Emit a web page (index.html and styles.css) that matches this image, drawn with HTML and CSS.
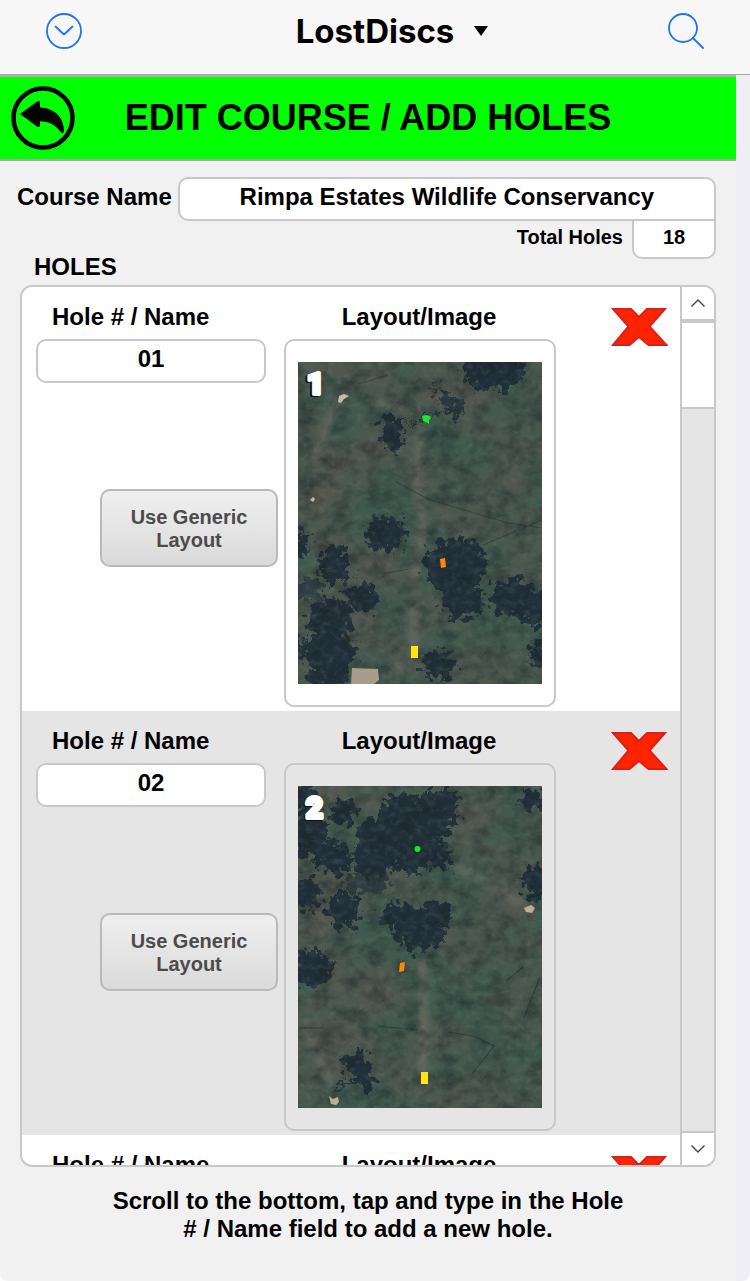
FILE: index.html
```
<!DOCTYPE html>
<html lang="en">
<head>
<meta charset="utf-8">
<meta name="viewport" content="width=device-width, initial-scale=1">
<title>LostDiscs</title>
<link rel="stylesheet" href="styles.css">
</head>
<body>
<svg class="defs" width="0" height="0" aria-hidden="true">
  <defs>
    <!-- broad brown patches over the grass -->
    <filter id="patches" x="0" y="0" width="100%" height="100%" color-interpolation-filters="sRGB">
      <feTurbulence type="fractalNoise" baseFrequency="0.013 0.017" numOctaves="5" seed="7"/>
      <feColorMatrix values="0 0 0 0 0.34  0 0 0 0 0.34  0 0 0 0 0.31  2.2 0 0 0 -0.75"/>
    </filter>
    <filter id="grain" x="0" y="0" width="100%" height="100%" color-interpolation-filters="sRGB">
      <feTurbulence type="fractalNoise" baseFrequency="0.057 0.063" numOctaves="5" seed="3"/>
      <feColorMatrix values="0 0 0 0 0.10  0 0 0 0 0.14  0 0 0 0 0.15  0 1.6 0 0 -0.62"/>
    </filter>
    <filter id="glint" x="0" y="0" width="100%" height="100%" color-interpolation-filters="sRGB">
      <feTurbulence type="fractalNoise" baseFrequency="0.137 0.151" numOctaves="4" seed="19"/>
      <feColorMatrix values="0 0 0 0 0.42  0 0 0 0 0.50  0 0 0 0 0.46  0 0 2.4 0 -1.1"/>
    </filter>
    <filter id="canopy" x="-20%" y="-20%" width="140%" height="140%" color-interpolation-filters="sRGB">
      <feTurbulence type="fractalNoise" baseFrequency="0.137" numOctaves="3" seed="5" result="n"/>
      <feDisplacementMap in="SourceGraphic" in2="n" scale="26" xChannelSelector="R" yChannelSelector="G" result="d"/>
      <feGaussianBlur in="d" stdDeviation="0.6"/>
    </filter>
    <filter id="soft"><feGaussianBlur stdDeviation="3"/></filter>
  </defs>
</svg>

<header class="topbar">
  <button class="plain topbar-left" type="button" aria-label="Show menu">
    <svg width="36" height="36" viewBox="0 0 36 36" fill="none" stroke="#2075e8" stroke-width="1.8"><circle cx="18" cy="18" r="17"/><path d="M9.500 13.500l8.500 8 8.500-8" stroke-linecap="round" stroke-linejoin="round"/></svg>
  </button>
  <h1 class="app-name">LostDiscs</h1>
  <div class="topbar-right">
    <button class="plain" type="button" aria-label="Switch file">
      <svg width="14" height="10" viewBox="0 0 14 10"><path d="M0 0h14L7 10z"/></svg>
    </button>
    <button class="plain" type="button" aria-label="Search">
      <svg width="36" height="36" viewBox="0 0 36 36" fill="none" stroke="#2075e8" stroke-width="1.8"><circle cx="15" cy="15" r="14"/><path d="M25 25l10 10" stroke-linecap="round"/></svg>
    </button>
  </div>
</header>

<main class="page">
  <div class="banner">
    <button class="plain" type="button" aria-label="Back">
      <svg width="64" height="64" viewBox="0 0 64 64"><circle cx="32" cy="32" r="29.500" fill="none" stroke="#000" stroke-width="4.600"/><path d="M9 28L26.500 15.300Q29 14 29 17V21.500C42 22 53 30 53 45Q52.500 48.500 50 46.500C44 38.500 38 35.500 29 35.300V39.500Q28.500 42 26 40.500z"/></svg>
    </button>
    <h2 class="banner-title">EDIT COURSE / ADD HOLES</h2>
  </div>

  <div class="course">
    <label for="course-name">Course Name</label>
    <input class="field course-field" id="course-name" type="text" value="Rimpa Estates Wildlife Conservancy">
  </div>
  <div class="totals">
    <h3 class="holes-title">HOLES</h3>
    <label class="total-label" for="total">Total Holes</label>
    <input class="field total-field" id="total" type="text" value="18">
  </div>

  <section class="panel" aria-label="Holes">
    <div class="list">
      <article class="hole">
        <div class="name-col">
          <label class="heading" for="hole-1">Hole # / Name</label>
          <input class="field hole-field" id="hole-1" type="text" value="01">
          <button class="generic" type="button">Use Generic Layout</button>
        </div>
        <div class="image-col">
          <h4 class="heading">Layout/Image</h4>
          <div class="frame">
            <svg class="map" viewBox="0 0 244 322" role="img" aria-label="Aerial layout of hole 1">
              <rect width="244" height="322" fill="#40594e"/>
              <rect width="244" height="322" filter="url(#patches)"/>
              <g filter="url(#soft)" fill="none" stroke="#756e67" opacity=".6">
                <path d="M124 60L120 110L124 170L116 220L116 290" stroke-width="9"/>
                <path d="M45 35L28 62L15 100" stroke-width="8"/>
                <path d="M66 36L112 50" stroke-width="5"/>
                <path d="M115 298L84 315" stroke-width="6"/>
              </g>
              <g fill="none" stroke="#303a38" stroke-width="1.200" opacity=".7">
                <path d="M98 120L130 137L160 146L210 161L244 166M84 212L110 207M185 183L244 158M60 22L90 13"/>
              </g>
              <g filter="url(#canopy)" fill="#212f3a">
                <ellipse cx="195" cy="9" rx="31" ry="20"/>
                <path d="M136 23l14 6 14 13-1 14-11-4-10-14z" opacity=".85"/>
                <path d="M86 53l18 3 3 10-7 23-14-2-4-17z"/>
                <path d="M101 58q13 6 25-1l20-11" fill="none" stroke="#212f3a" stroke-width="2"/>
                <ellipse cx="87" cy="172" rx="20" ry="17"/>
                <ellipse cx="157" cy="205" rx="31" ry="29"/>
                <ellipse cx="165" cy="239" rx="22" ry="18"/>
                <ellipse cx="217" cy="236" rx="24" ry="19"/>
                <ellipse cx="238" cy="247" rx="14" ry="17"/>
                <ellipse cx="36" cy="203" rx="15" ry="19"/>
                <ellipse cx="64" cy="236" rx="17" ry="15"/>
                <ellipse cx="12" cy="228" rx="13" ry="12" opacity=".65"/>
                <ellipse cx="32" cy="256" rx="23" ry="20"/>
                <ellipse cx="33" cy="290" rx="25" ry="22"/>
                <ellipse cx="28" cy="316" rx="23" ry="10"/>
                <ellipse cx="2" cy="182" rx="9" ry="14"/>
                <ellipse cx="4" cy="285" rx="7" ry="10"/>
                <ellipse cx="141" cy="302" rx="17" ry="15"/>
                <ellipse cx="241" cy="290" rx="9" ry="14"/>
              </g>
              <rect width="244" height="322" filter="url(#grain)" opacity=".7"/>
              <rect width="244" height="322" filter="url(#glint)" opacity=".25"/>
              <path d="M54 306l26 1 1 11-5 4H53z" fill="#a99c8c"/>
              <path d="M41 34l5-2 5 2-5 3-3 4-3-1zM12 138l3-3 2 2-2 3z" fill="#c8b8a8"/>
              <path d="M124 54l4-1 4 1 1 3-2 1v4l-3-2-3-1z" fill="#1fe82f"/>
              <path d="M142 197l5-1 1 9-5 1z" fill="#ff860c"/>
              <path d="M113 284h7v12h-7z" fill="#ffe510"/>
              <text class="hole-number number-shadow" x="7" y="33">1</text>
              <text class="hole-number" x="9" y="32">1</text>
            </svg>
          </div>
        </div>
        <button class="plain delete" type="button" aria-label="Delete hole 01">
          <svg width="57" height="40" viewBox="0 0 57 40"><path d="M2 2H20L28 10 36 2H54L38.500 19.500 55.500 38H37.500L28 30 18.500 38H2L17.500 19.500z" fill="#ff2400" stroke="#d8201c" stroke-width="2"/></svg>
        </button>
      </article>

      <article class="hole">
        <div class="name-col">
          <label class="heading" for="hole-2">Hole # / Name</label>
          <input class="field hole-field" id="hole-2" type="text" value="02">
          <button class="generic" type="button">Use Generic Layout</button>
        </div>
        <div class="image-col">
          <h4 class="heading">Layout/Image</h4>
          <div class="frame">
            <svg class="map" viewBox="0 0 244 322" role="img" aria-label="Aerial layout of hole 2">
              <rect width="244" height="322" fill="#40594e"/>
              <rect width="244" height="322" filter="url(#patches)"/>
              <g filter="url(#soft)" fill="none" stroke="#7b746a" opacity=".6">
                <path d="M152 79L185 95L222 117L232 125" stroke-width="6"/>
                <path d="M124 174L126 210L125 290" stroke-width="8"/>
                <path d="M5 235L32 295" stroke-width="6"/>
              </g>
              <g fill="none" stroke="#2b3434" stroke-width="1.200" opacity=".7">
                <path d="M150 246l25 4 21 10-22 28M242 191l-16 41M208 195l17-14M0 242h26M80 240l40 4"/>
              </g>
              <g filter="url(#canopy)" fill="#212f3a">
                <ellipse cx="8" cy="14" rx="12" ry="18"/>
                <ellipse cx="12" cy="48" rx="17" ry="25"/>
                <ellipse cx="36" cy="72" rx="17" ry="17"/>
                <ellipse cx="46" cy="27" rx="12" ry="14"/>
                <ellipse cx="102" cy="27" rx="20" ry="19"/>
                <ellipse cx="135" cy="28" rx="23" ry="23"/>
                <ellipse cx="148" cy="12" rx="12" ry="10"/>
                <ellipse cx="82" cy="49" rx="24" ry="19"/>
                <ellipse cx="77" cy="70" rx="22" ry="22"/>
                <ellipse cx="113" cy="60" rx="25" ry="27"/>
                <ellipse cx="143" cy="70" rx="11" ry="16"/>
                <ellipse cx="67" cy="97" rx="24" ry="11" opacity=".65"/>
                <ellipse cx="235" cy="14" rx="14" ry="10"/>
                <ellipse cx="239" cy="97" rx="14" ry="18"/>
                <ellipse cx="9" cy="107" rx="13" ry="16"/>
                <ellipse cx="46" cy="124" rx="18" ry="17"/>
                <ellipse cx="102" cy="130" rx="20" ry="14"/>
                <ellipse cx="135" cy="131" rx="17" ry="17"/>
                <ellipse cx="122" cy="148" rx="25" ry="18"/>
                <ellipse cx="15" cy="183" rx="20" ry="19"/>
                <ellipse cx="58" cy="279" rx="14" ry="12"/>
                <ellipse cx="68" cy="291" rx="8" ry="14"/>
                <path d="M36 309q8-15 25-15" fill="none" stroke="#212f3a" stroke-width="3"/>
              </g>
              <rect width="244" height="322" filter="url(#grain)" opacity=".7"/>
              <rect width="244" height="322" filter="url(#glint)" opacity=".25"/>
              <path d="M226 122l7-3 4 3-3 5-6-1zM31 310l4 3 5-2 1 5-3 3-5-1z" fill="#c0ad99"/>
              <circle cx="119.500" cy="63" r="3" fill="#10ed20"/>
              <path d="M102 177l5-1-1 9-5 1z" fill="#ff860c"/>
              <path d="M123 286h7v12h-7z" fill="#ffe510"/>
              <text class="hole-number number-shadow" x="7" y="33">2</text>
              <text class="hole-number" x="8" y="32">2</text>
            </svg>
          </div>
        </div>
        <button class="plain delete" type="button" aria-label="Delete hole 02">
          <svg width="57" height="40" viewBox="0 0 57 40"><path d="M2 2H20L28 10 36 2H54L38.500 19.500 55.500 38H37.500L28 30 18.500 38H2L17.500 19.500z" fill="#ff2400" stroke="#d8201c" stroke-width="2"/></svg>
        </button>
      </article>

      <article class="hole">
        <div class="name-col"><h4 class="heading">Hole # / Name</h4></div>
        <div class="image-col"><h4 class="heading">Layout/Image</h4></div>
        <button class="plain delete" type="button" aria-label="Delete hole 03">
          <svg width="57" height="40" viewBox="0 0 57 40"><path d="M2 2H20L28 10 36 2H54L38.500 19.500 55.500 38H37.500L28 30 18.500 38H2L17.500 19.500z" fill="#ff2400" stroke="#d8201c" stroke-width="2"/></svg>
        </button>
      </article>
    </div>
    <div class="scroller">
      <button class="plain step step-up" type="button" aria-label="Scroll up">
        <svg width="14" height="8" viewBox="0 0 14 8" fill="none" stroke="#444" stroke-width="1.400"><path d="M.5 7.500L7 1l6.500 6.500"/></svg>
      </button>
      <div class="thumb"></div>
      <button class="plain step step-down" type="button" aria-label="Scroll down">
        <svg width="14" height="8" viewBox="0 0 14 8" fill="none" stroke="#444" stroke-width="1.400"><path d="M.5 .5L7 7l6.500-6.500"/></svg>
      </button>
    </div>
  </section>

  <p class="hint">Scroll to the bottom, tap and type in the Hole # / Name field to add a new hole.</p>
</main>
</body>
</html>
```
FILE: styles.css
```
* { box-sizing: border-box; }

body {
  margin: 0;
  height: 100vh;
  display: flex;
  flex-direction: column;
  background: #fdfdfd;
  color: #000;
  font: bold 24px/28px "Liberation Sans", Arial, sans-serif;
}

h1, h2, h3, h4, p { margin: 0; font-weight: bold; }

svg { display: block; }
.defs { position: absolute; }

.plain {
  padding: 0;
  border: 0;
  background: none;
  cursor: pointer;
}

.topbar {
  flex: none;
  display: grid;
  grid-template-columns: 1fr auto 1fr;
  align-items: center;
  height: 75px;
  padding: 0 46px 12px;
  background: #f7f7f7;
  border-bottom: 1px solid #a9a9ab;
}
.topbar-left { justify-self: start; }
.app-name {
  font: 700 33px/40px Inter, sans-serif;
}
.topbar-right {
  display: flex;
  align-items: center;
  justify-content: space-between;
  padding-left: 20px;
}

.page {
  flex: 1;
  min-height: 0;
  display: flex;
  flex-direction: column;
  background: #f1f1f1;
  border-right: 14px solid #eeeef4;
  border-radius: 0 0 8px 8px;
}

.banner {
  flex: none;
  display: grid;
  grid-template-columns: 1fr auto 1fr;
  align-items: center;
  height: 86px;
  padding: 0 11px;
  background: #0f0;
  border-top: 2px solid #b0b0b0;
  border-bottom: 2px solid #a0aca0;
}
.banner-title { font-size: 36px; line-height: 40px; }

.field {
  min-width: 0;
  height: 44px;
  padding: 0 8px 4px;
  border: 2px solid #c8c8c8;
  border-radius: 10px;
  background: #fff;
  color: inherit;
  font: inherit;
  text-align: center;
}

.course {
  display: flex;
  align-items: center;
  gap: 6px;
  padding: 16px 20px 0 17px;
}
.course label { padding-bottom: 4px; }
.course-field {
  flex: 1;
  border-bottom-right-radius: 0;
}

.totals {
  display: flex;
  align-items: flex-start;
  padding: 0 20px 4px 34px;
}
.holes-title {
  padding-top: 32px;
  font-size: 24px;
}
.total-label {
  margin-left: auto;
  padding: 2px 9px 0 0;
  font-size: 20px;
}
.total-field {
  width: 84px;
  height: 38px;
  border-top: 0;
  border-radius: 0 0 10px 10px;
  font-size: 20px;
}

.panel {
  flex: 1;
  min-height: 0;
  margin: 0 20px;
  display: flex;
  overflow: hidden;
  border: 2px solid #c8c8c8;
  border-radius: 12px;
  background: #fff;
}
.list {
  flex: 1;
  min-width: 0;
  overflow-y: auto;
  scrollbar-width: none;
}

.hole {
  display: grid;
  grid-template-columns: minmax(0, 242fr) minmax(0, 272fr) minmax(0, 106fr);
  gap: 6px;
  padding: 16px 12px 4px 14px;
}
.hole:nth-child(even) { background: #e5e5e5; }

.heading {
  display: block;
  font-size: 24px;
  margin-bottom: 8px;
}
.name-col {
  display: flex;
  flex-direction: column;
}
.name-col .heading { padding-left: 16px; }
.hole-field { margin-right: 12px; }
.generic {
  align-self: flex-end;
  width: 178px;
  height: 78px;
  margin-top: 106px;
  padding: 2px 24px 0;
  border: 2px solid #b9b9b9;
  border-radius: 10px;
  background: linear-gradient(#efefef, #dadada);
  color: #4b4b4b;
  font: bold 20px/23px "Liberation Sans", Arial, sans-serif;
  cursor: pointer;
}

.image-col .heading {
  padding-right: 2px;
  text-align: center;
}
.frame {
  padding: 21px 12px;
  border: 2px solid #c8c8c8;
  border-radius: 10px;
}
.map { width: 100%; height: auto; }
.hole-number {
  font: 900 29px Roboto, sans-serif;
  fill: #fff;
  stroke: #fff;
  stroke-width: 4px;
  stroke-linejoin: round;
}
.number-shadow { fill: #111; stroke: #111; }

.delete {
  align-self: start;
  justify-self: end;
  margin-top: 4px;
}

.scroller {
  flex: none;
  width: 34px;
  display: flex;
  flex-direction: column;
  border-left: 2px solid #c8c8c8;
  background: #e5e5e5;
}
.step {
  display: flex;
  align-items: center;
  justify-content: center;
  background: #fff;
}
.step-up {
  height: 36px;
  border-bottom: 4px solid #c8c8c8;
}
.step-down {
  height: 34px;
  margin-top: auto;
  border-top: 2px solid #c8c8c8;
}
.thumb {
  height: 86px;
  background: #fff;
  border-bottom: 2px solid #c8c8c8;
}

.hint {
  align-self: center;
  max-width: 524px;
  padding: 20px 0 38px;
  text-align: center;
}
```
